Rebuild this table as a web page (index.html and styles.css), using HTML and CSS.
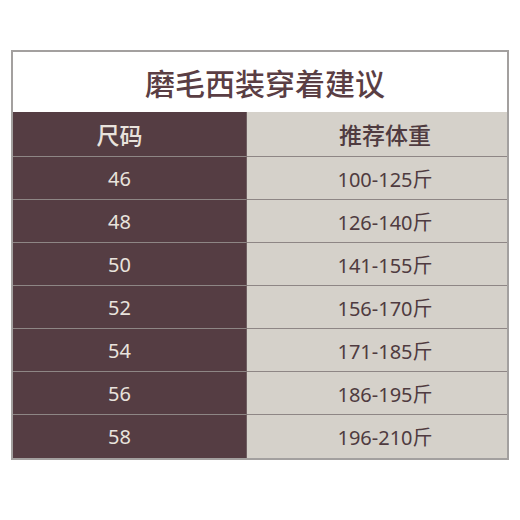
FILE: index.html
```html
<!DOCTYPE html>
<html lang="zh">
<head>
<meta charset="utf-8">
<title>磨毛西装穿着建议</title>
<link rel="stylesheet" href="styles.css">
</head>
<body>
<div class="sheet">
  <div class="title">磨毛西装穿着建议</div>
  <div class="grid">
    <div class="cell left head">尺码</div><div class="cell right head">推荐体重</div>
    <div class="cell left">46</div><div class="cell right">100-125斤</div>
    <div class="cell left">48</div><div class="cell right">126-140斤</div>
    <div class="cell left">50</div><div class="cell right">141-155斤</div>
    <div class="cell left">52</div><div class="cell right">156-170斤</div>
    <div class="cell left">54</div><div class="cell right">171-185斤</div>
    <div class="cell left">56</div><div class="cell right">186-195斤</div>
    <div class="cell left last">58</div><div class="cell right last">196-210斤</div>
  </div>
</div>
</body>
</html>
```
FILE: styles.css
```css
html, body {
  margin: 0;
  padding: 0;
  background: #ffffff;
}
body {
  padding: 50px 11px 0 11px;
  font-family: "Noto Sans", "Noto Sans CJK SC", sans-serif;
}
.sheet {
  width: 498px;
  box-sizing: border-box;
  border: 2px solid #a3a09f;
  background: #ffffff;
}
.title {
  height: 60px;
  display: flex;
  align-items: center;
  justify-content: center;
  font-size: 30px;
  font-weight: 500;
  color: #5a3e44;
  padding-left: 10px;
}
.grid {
  display: grid;
  grid-template-columns: 234px 1fr;
  grid-template-rows: 45px;
  grid-auto-rows: 43px;
}
.cell {
  display: flex;
  align-items: center;
  justify-content: center;
  box-sizing: border-box;
  border-bottom: 1px solid #8e8685;
  font-size: 20px;
}
.cell.head {
  font-size: 23px;
  font-weight: 500;
}
.left {
  background: #553d43;
  color: #e9e3dd;
  border-right: 1px solid #6f5f62;
  padding-right: 20px;
}
.right {
  background: #d5d1ca;
  color: #4f3b40;
  padding-left: 16px;
}
.cell.last {
  border-bottom: none;
}
```
